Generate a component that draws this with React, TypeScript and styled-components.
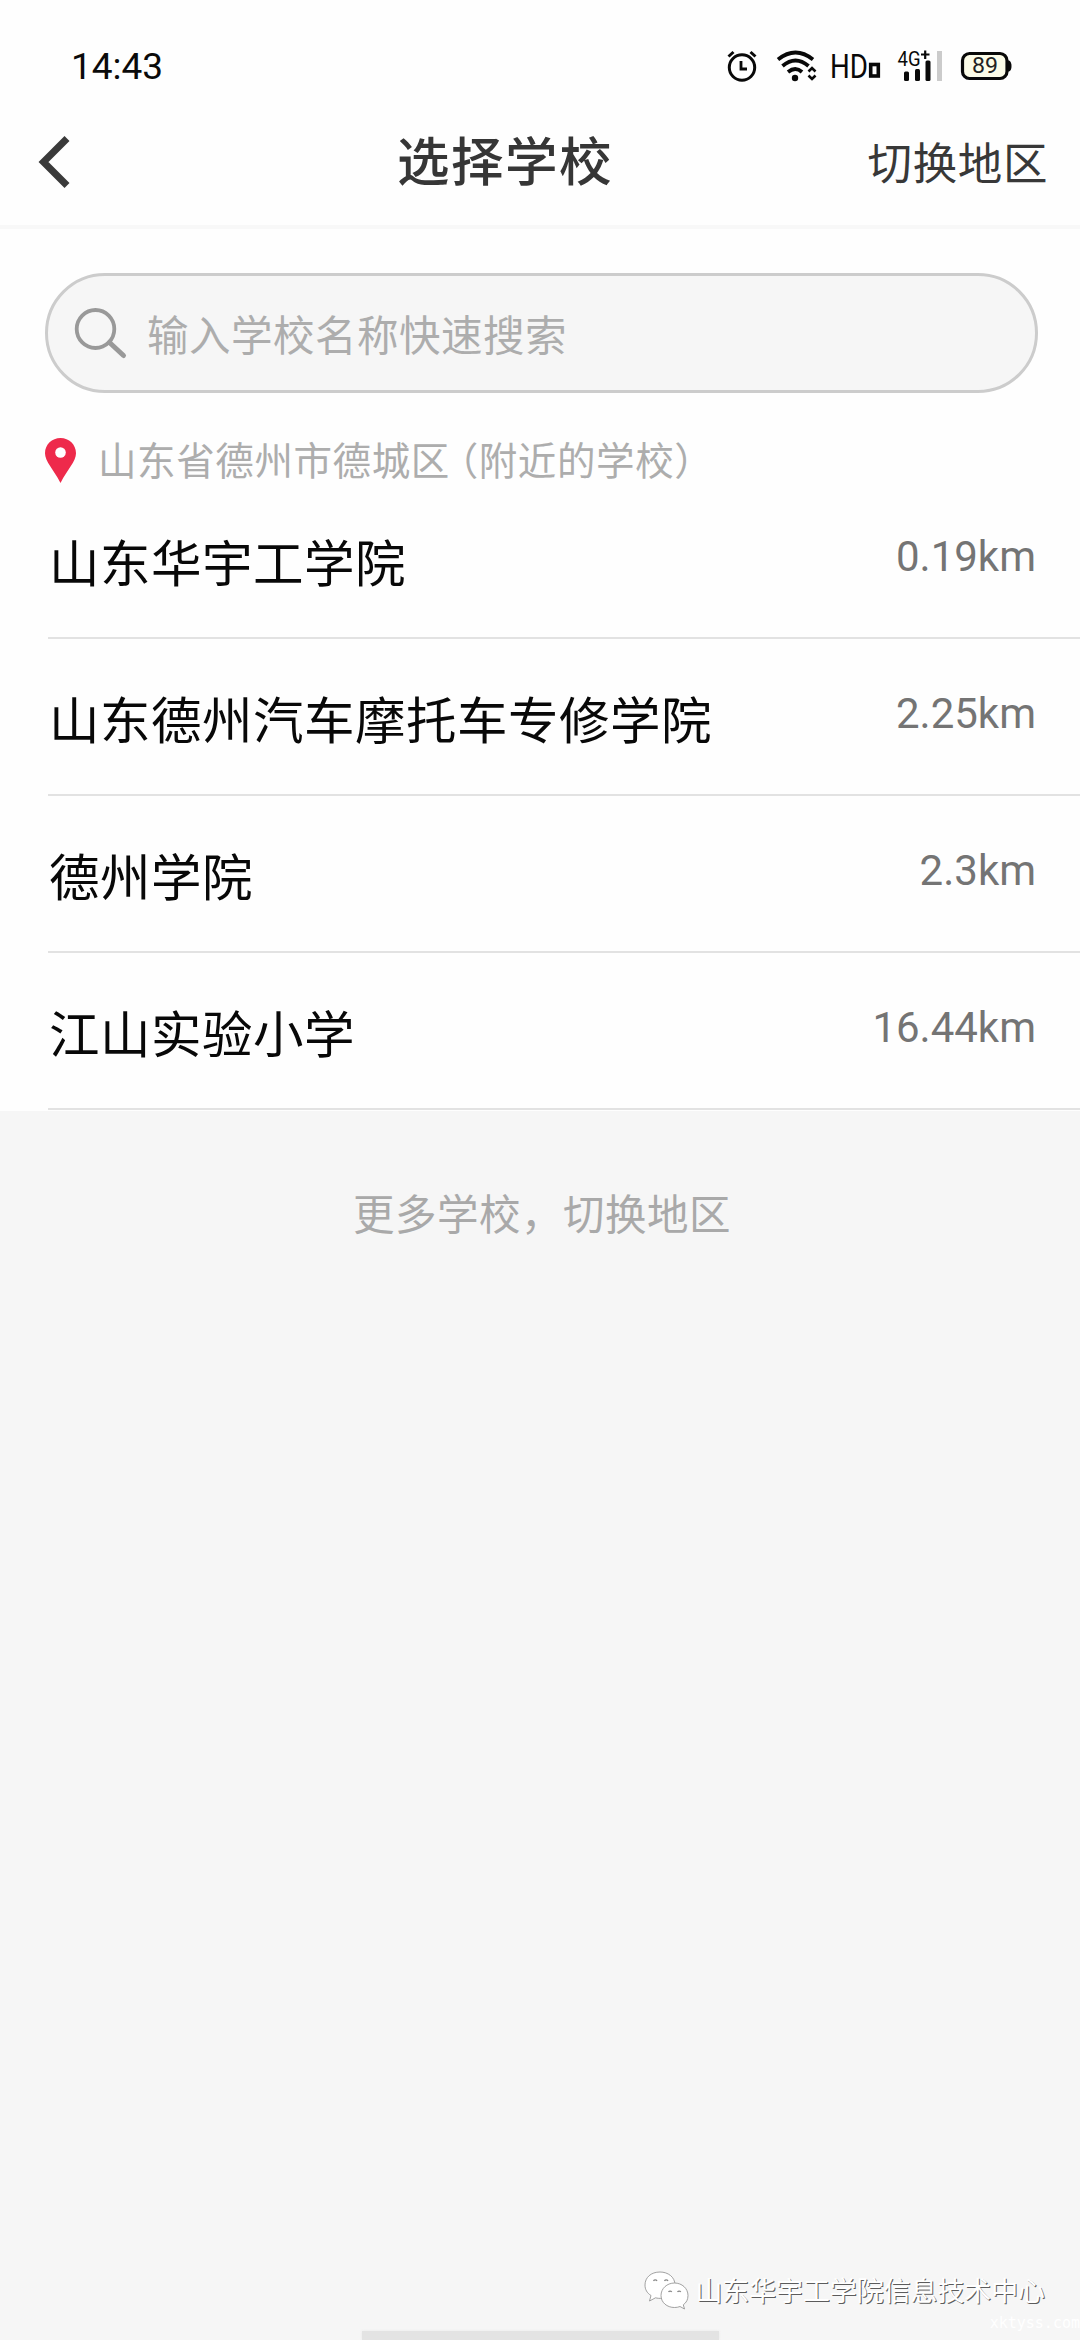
import React from "react";
import styled, { createGlobalStyle } from "styled-components";

const GlobalStyle = createGlobalStyle`
  * { box-sizing: border-box; }
  body { margin: 0; background: #f6f6f6; }
`;

const cjk = `"Noto Sans CJK SC", "Noto Sans", sans-serif`;

const Screen = styled.div`
  position: relative;
  display: flex;
  flex-direction: column;
  width: 1080px;
  height: 2340px;
  overflow: hidden;
  background: #f6f6f6;
  font-family: ${cjk};
`;

const StatusBar = styled.div`
  display: flex;
  justify-content: space-between;
  align-items: flex-start;
  height: 100px;
  padding: 45px 66px 0 71px;
  background: #fefefe;
`;

const Clock = styled.time`
  padding-top: 1px;
  font: 400 37px/42px Roboto, sans-serif;
  color: #0a0a0a;
`;

const Header = styled.header`
  display: grid;
  grid-template-columns: 1fr auto 1fr;
  align-items: center;
  height: 129px;
  padding: 0 32px 6px 38px;
  background: #fefefe;
  border-bottom: 4px solid #f8f8f8;
`;

const BackButton = styled.button`
  display: flex;
  padding: 5px 0 0;
  border: 0;
  background: none;
`;

const Title = styled.h1`
  margin: 0;
  padding: 0 76px 3px 0;
  font-size: 52.5px;
  line-height: 60px;
  letter-spacing: 1.5px;
  font-weight: 500;
  color: #363636;
`;

const RegionButton = styled.button`
  justify-self: end;
  padding: 2px 0 0;
  border: 0;
  background: none;
  font: 400 44.5px/56px ${cjk};
  letter-spacing: 0.6px;
  color: #383838;
  white-space: nowrap;
`;

const Panel = styled.main`
  display: flex;
  flex-direction: column;
  height: 882px;
  padding-top: 44px;
  background: #fefefe;
`;

const SearchField = styled.label`
  display: flex;
  align-items: center;
  gap: 18px;
  width: 993px;
  height: 120px;
  margin-left: 45px;
  padding-left: 26px;
  border: 3px solid #ccc;
  border-radius: 60px;
  background: #f6f6f6;
`;

const Placeholder = styled.span`
  font-size: 41.5px;
  line-height: 60px;
  letter-spacing: 0.5px;
  color: #adadad;
`;

const Location = styled.div`
  display: flex;
  align-items: center;
  gap: 22px;
  height: 88px;
  margin-top: 23px;
  padding-left: 45px;
`;

const Place = styled.span`
  padding-bottom: 5px;
  font-size: 38.5px;
  line-height: 56px;
  letter-spacing: 0.6px;
  color: #adadad;
`;

const OpenParen = styled.span`
  margin-left: 9px;
  font-feature-settings: "halt";
`;

const SchoolList = styled.ul`
  margin: -22px 0 0 48px;
  padding: 0;
  list-style: none;
`;

const SchoolRow = styled.li`
  display: flex;
  justify-content: space-between;
  align-items: flex-start;
  height: 157px;
  padding: 40px 44px 0 0;
  border-bottom: 2px solid #e2e2e2;
`;

const SchoolName = styled.span`
  padding-left: 1px;
  font-size: 50.5px;
  line-height: 76px;
  letter-spacing: 0.5px;
  color: #080808;
`;

const Distance = styled.span`
  padding-top: 10px;
  font: 400 42px/50px Roboto, sans-serif;
  color: #747474;
`;

const MoreLink = styled.p`
  margin: 71px 0 0 4px;
  text-align: center;
  font-size: 41.5px;
  line-height: 60px;
  letter-spacing: 0.5px;
  color: #a9a9a9;
`;

const Watermark = styled.div`
  position: absolute;
  right: 35px;
  bottom: 30px;
  display: flex;
  align-items: center;
  gap: 6px;
  font-size: 26.9px;
  line-height: 40px;
  color: #fff;
  text-shadow: 1px 1px 0 #5c5c5c;
`;

const SiteMark = styled.span`
  position: absolute;
  right: 0;
  bottom: 8px;
  font: 400 15px/18px "DejaVu Sans Mono", monospace;
  color: #fff;
`;

const HomeBar = styled.div`
  position: absolute;
  left: 362px;
  bottom: 0;
  width: 357px;
  height: 9px;
  background: #e3e3e3;
  box-shadow: 0 0 3px #e8e8e8;
`;

const StatusIcons = () => (
  <svg width="290" height="40" viewBox="724 45 290 40" fill="none" stroke="#090909">
    <circle cx="742" cy="67.5" r="12.7" strokeWidth="3" />
    <path d="M741 61v8h6" strokeWidth="2.8" />
    <path d="M728.5 56.5l5-4.5M755.5 56.5l-5-4.5" strokeWidth="3" />

    <path d="M778 59.5Q795.5 45.5 813 59.5" strokeWidth="3.8" />
    <path d="M782.5 66Q795.5 55 808.5 66" strokeWidth="3.8" />
    <path d="M788 72Q795.5 66 802 72" strokeWidth="3.8" />
    <circle cx="795" cy="78" r="3.2" fill="#090909" stroke="none" />
    <path d="M808.5 71.5l3.5-3.5 3.5 3.5M808.5 75.5l3.5 3.5 3.5-3.5" strokeWidth="2.6" />

    <g fill="#090909" stroke="none" fontFamily="Roboto, sans-serif">
      <text x="830" y="78" fontSize="33" textLength="38" lengthAdjust="spacingAndGlyphs">HD</text>
      <text x="897.5" y="66" fontSize="21" textLength="23" lengthAdjust="spacingAndGlyphs">4G</text>
      <rect x="904" y="71.5" width="5" height="9.5" rx="1.5" />
      <rect x="915" y="69" width="5" height="12" rx="1.5" />
      <rect x="925.5" y="60.5" width="5" height="20.5" rx="1.5" />
    </g>
    <path d="M921 54.5h8.500M925.200 50.500v8.500" strokeWidth="2.200" />
    <rect x="870.700" y="64.500" width="7.600" height="11.500" strokeWidth="3.600" />
    <rect x="937" y="51" width="5" height="30" fill="#cbcbcb" stroke="none" />

    <rect x="962.500" y="53.500" width="44.500" height="25" rx="7" fill="#fcfce8" strokeWidth="3.200" />
    <path d="M1007.500 60.500h1.500q2.500 1 2.500 5.500t-2.500 5.500h-1.500z" fill="#090909" stroke="none" />
    <text x="972" y="73" fontSize="22" fontFamily="Roboto, sans-serif" fill="#222" stroke="none" textLength="26" lengthAdjust="spacingAndGlyphs">89</text>
  </svg>
);

const BackIcon = () => (
  <svg width="32" height="52" viewBox="0 0 32 52" fill="none" stroke="#3a3a3a" strokeWidth="7">
    <path d="M29 2.500L5.500 26 29 49.500" />
  </svg>
);

const SearchIcon = () => (
  <svg width="55" height="54" viewBox="0 0 55 54" fill="none" stroke="#999">
    <ellipse cx="21.500" cy="23" rx="18.800" ry="19" strokeWidth="3.800" />
    <path d="M35.500 36.500L49.500 49.500" strokeWidth="5" strokeLinecap="round" />
  </svg>
);

const PinIcon = () => (
  <svg width="31" height="45" viewBox="0 0 31 45">
    <path d="M15.500 0C7 0 0 6.500 0 15.200 0 23.500 8.500 31 15.500 45 22.500 31 31 23.500 31 15.200 31 6.500 24 0 15.500 0Z" fill="#ee2a4b" />
    <circle cx="15.500" cy="14.500" r="5.300" fill="#fff" />
  </svg>
);

const ChatIcon = () => (
  <svg width="45" height="39" viewBox="0 0 45 39" fill="#fff" stroke="#8a8a8a" strokeWidth="0.800">
    <path d="M16 1C7 1 1 6.500 1 14c0 4.500 2 8 6 10.500L5.500 30l6-3.200c2 .500 4 .700 7 .500C31 26 31 20 31 14 31 6 24 1 16 1Z" />
    <path d="M30.500 12C23 12 17 17.500 17 24.500S23 36.500 30.500 36.500c2 0 4-.300 5.500-1l4.500 2.500-1.200-4.200C42.500 31.500 44 28.500 44 24.500 44 17.500 38 12 30.500 12Z" />
    <path d="M9.500 10a2 2 0 0 1 3.500 0M20.500 10a2 2 0 0 1 3.500 0M24.500 21a2 2 0 0 1 3.300 0M33.500 21a2 2 0 0 1 3.300 0" fill="none" strokeWidth="1.300" />
  </svg>
);

const schools = [
  { name: "山东华宇工学院", distance: "0.19km" },
  { name: "山东德州汽车摩托车专修学院", distance: "2.25km" },
  { name: "德州学院", distance: "2.3km" },
  { name: "江山实验小学", distance: "16.44km" },
];

export default function App() {
  return (
    <>
      <GlobalStyle />
      <Screen>
        <StatusBar>
          <Clock>14:43</Clock>
          <StatusIcons />
        </StatusBar>
        <Header>
          <BackButton aria-label="返回">
            <BackIcon />
          </BackButton>
          <Title>选择学校</Title>
          <RegionButton>切换地区</RegionButton>
        </Header>
        <Panel>
          <SearchField>
            <SearchIcon />
            <Placeholder>输入学校名称快速搜索</Placeholder>
          </SearchField>
          <Location>
            <PinIcon />
            <Place>
              山东省德州市德城区<OpenParen>（</OpenParen>附近的学校）
            </Place>
          </Location>
          <SchoolList>
            {schools.map((school) => (
              <SchoolRow key={school.name}>
                <SchoolName>{school.name}</SchoolName>
                <Distance>{school.distance}</Distance>
              </SchoolRow>
            ))}
          </SchoolList>
        </Panel>
        <MoreLink>更多学校，切换地区</MoreLink>
        <Watermark>
          <ChatIcon />
          山东华宇工学院信息技术中心
        </Watermark>
        <SiteMark>xktyss.com</SiteMark>
        <HomeBar />
      </Screen>
    </>
  );
}
